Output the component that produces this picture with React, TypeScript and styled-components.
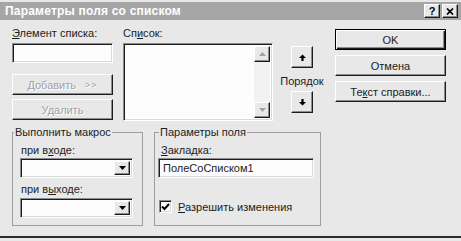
import styled, { createGlobalStyle, css } from "styled-components";

const GlobalStyle = createGlobalStyle`
  html, body {
    margin: 0;
    padding: 0;
    background: #e8e8e8;
  }
  body {
    font-family: "Liberation Sans", Arial, sans-serif;
    font-size: 11px;
    color: #1c1c1c;
  }
`;

const raised = css`
  box-sizing: border-box;
  background: #e8e8e8;
  border: 1px solid;
  border-color: #fff #1c1c1c #1c1c1c #fff;
  box-shadow: inset -1px -1px 0 #8c8c8c;
`;

const sunken = css`
  box-sizing: border-box;
  background: #fdfdfd;
  border: 1px solid;
  border-color: #8c8c8c #fff #fff #8c8c8c;
  box-shadow: inset 1px 1px 0 #1c1c1c, inset -1px -1px 0 #dadada;
`;

const Window = styled.div`
  width: 461px;
  height: 238px;
  box-sizing: border-box;
  padding-top: 2px;
  background: #e8e8e8;
  border-bottom: 2px solid #2c2c2c;
  display: flex;
  flex-direction: column;
`;

const TitleBar = styled.div`
  height: 18px;
  background: #a6a6a6;
  display: flex;
  align-items: center;
  justify-content: space-between;
  padding: 0 3px 0 5px;
`;

const Title = styled.span`
  font-weight: bold;
  font-size: 12px;
  color: #fff;
  letter-spacing: 0.2px;
`;

const CaptionButtons = styled.div`
  display: flex;
  gap: 2px;
`;

const CaptionButton = styled.div`
  ${raised};
  width: 16px;
  height: 14px;
  display: flex;
  align-items: center;
  justify-content: center;
  font-weight: bold;
  font-size: 11px;
  color: #000;
`;

const Content = styled.div`
  padding: 7px 0 0 12px;
  display: flex;
  flex-direction: column;
`;

const TopRow = styled.div`
  display: flex;
  align-items: flex-start;
  height: 94px;
`;

const Column = styled.div<{ $width: number; $gap?: number }>`
  width: ${(p) => p.$width}px;
  margin-left: ${(p) => p.$gap ?? 0}px;
  display: flex;
  flex-direction: column;
`;

const Label = styled.div<{ $indent?: number }>`
  line-height: 13px;
  height: 13px;
  padding-left: ${(p) => p.$indent ?? 0}px;
  white-space: nowrap;
`;

const Key = styled.span`
  text-decoration: underline;
  text-underline-offset: 1px;
`;

const TextField = styled.div<{ $width: number }>`
  ${sunken};
  width: ${(p) => p.$width}px;
  height: 20px;
  margin-top: 3px;
  padding: 3px 4px;
  line-height: 13px;
  white-space: nowrap;
`;

const Button = styled.button<{ $primary?: boolean }>`
  ${raised};
  font: 11px "Liberation Sans", Arial, sans-serif;
  color: #1c1c1c;
  height: 21px;
  padding: 0;
  display: flex;
  align-items: center;
  justify-content: center;
  ${(p) =>
    p.$primary &&
    css`
      border-color: #000;
      box-shadow: inset 1px 1px 0 #fff, inset -1px -1px 0 #1c1c1c,
        inset -2px -2px 0 #8c8c8c;
    `}
  &:disabled {
    color: #a2a2a2;
    text-shadow: 1px 1px 0 #fff;
  }
`;

const SideButtons = styled.div`
  margin-top: 11px;
  display: flex;
  flex-direction: column;
  gap: 4px;
`;

const Chevrons = styled.span`
  font-size: 9px;
  margin-left: 9px;
  letter-spacing: 1px;
`;

const ListBox = styled.div`
  ${sunken};
  height: 78px;
  margin-top: 3px;
  padding: 2px;
  display: flex;
  justify-content: flex-end;
`;

const ScrollBar = styled.div`
  width: 16px;
  display: flex;
  flex-direction: column;
`;

const ScrollTrack = styled.div`
  flex: 1;
  background: #f2f2f2;
`;

const ScrollArrow = styled.div`
  ${raised};
  height: 16px;
  display: flex;
  align-items: center;
  justify-content: center;
`;

const OrderColumn = styled.div`
  width: 44px;
  margin-left: 7px;
  padding-top: 19px;
  display: flex;
  flex-direction: column;
  align-items: center;
`;

const OrderButton = styled.div`
  ${raised};
  width: 22px;
  height: 22px;
  display: flex;
  align-items: center;
  justify-content: center;
`;

const OrderLabel = styled.div`
  line-height: 13px;
  margin: 7px 0 3px;
`;

const DialogButtons = styled.div`
  width: 111px;
  margin-left: 11px;
  padding-top: 2px;
  display: flex;
  flex-direction: column;
  gap: 5px;
`;

const BottomRow = styled.div`
  display: flex;
  gap: 11px;
  margin-top: 5px;
`;

const Group = styled.fieldset<{ $width: number; $pad: number }>`
  box-sizing: border-box;
  width: ${(p) => p.$width}px;
  height: 100px;
  margin: 0;
  padding: 5px 0 0 ${(p) => p.$pad}px;
  border: 1px solid #9e9e9e;
  display: flex;
  flex-direction: column;
`;

const Legend = styled.legend<{ $shift: number }>`
  padding: 0 1px;
  margin-left: ${(p) => p.$shift}px;
  line-height: 13px;
`;

const Combo = styled.div<{ $top: number }>`
  ${sunken};
  width: 113px;
  height: 20px;
  margin-top: ${(p) => p.$top}px;
  padding: 2px;
  display: flex;
  justify-content: flex-end;
`;

const DropButton = styled.div`
  ${raised};
  width: 16px;
  display: flex;
  align-items: center;
  justify-content: center;
`;

const CheckRow = styled.div`
  display: flex;
  align-items: center;
  margin-top: 22px;
  padding-left: 1px;
  gap: 6px;
`;

const CheckBox = styled.div`
  ${sunken};
  width: 13px;
  height: 13px;
  display: flex;
  align-items: center;
  justify-content: center;
`;

const Triangle = ({ up, color = "#000" }: { up?: boolean; color?: string }) => (
  <svg width="7" height="4" viewBox="0 0 7 4">
    <path d={up ? "M0 4 L3.5 0 L7 4 Z" : "M0 0 L7 0 L3.5 4 Z"} fill={color} />
  </svg>
);

const Arrow = ({ up }: { up?: boolean }) => (
  <svg width="7" height="7" viewBox="0 0 7 7">
    <path
      d={
        up
          ? "M3.5 0.5 L7 4 H4.6 V7 H2.4 V4 H0 Z"
          : "M3.5 6.5 L7 3 H4.6 V0 H2.4 V3 H0 Z"
      }
      fill="#000"
    />
  </svg>
);

export default function App() {
  return (
    <>
      <GlobalStyle />
      <Window>
        <TitleBar>
          <Title>Параметры поля со списком</Title>
          <CaptionButtons>
            <CaptionButton>?</CaptionButton>
            <CaptionButton>
              <svg width="8" height="7" viewBox="0 0 8 7">
                <path d="M1 0.5 L7 6.5 M7 0.5 L1 6.5" stroke="#000" strokeWidth="1.7" />
              </svg>
            </CaptionButton>
          </CaptionButtons>
        </TitleBar>

        <Content>
          <TopRow>
            <Column $width={101}>
              <Label>
                <Key>Э</Key>лемент списка:
              </Label>
              <TextField $width={101} />
              <SideButtons>
                <Button disabled>
                  Добавить<Chevrons>&gt;&gt;</Chevrons>
                </Button>
                <Button disabled>Удалить</Button>
              </SideButtons>
            </Column>

            <Column $width={150} $gap={10}>
              <Label>
                Сп<Key>и</Key>сок:
              </Label>
              <ListBox>
                <ScrollBar>
                  <ScrollArrow>
                    <Triangle up color="#a2a2a2" />
                  </ScrollArrow>
                  <ScrollTrack />
                  <ScrollArrow>
                    <Triangle color="#a2a2a2" />
                  </ScrollArrow>
                </ScrollBar>
              </ListBox>
            </Column>

            <OrderColumn>
              <OrderButton>
                <Arrow up />
              </OrderButton>
              <OrderLabel>Порядок</OrderLabel>
              <OrderButton>
                <Arrow />
              </OrderButton>
            </OrderColumn>

            <DialogButtons>
              <Button $primary>OK</Button>
              <Button>Отмена</Button>
              <Button>
                Те<Key>к</Key>ст справки...
              </Button>
            </DialogButtons>
          </TopRow>

          <BottomRow>
            <Group $width={131} $pad={7}>
              <Legend $shift={-6}>Выполнить макрос</Legend>
              <Label $indent={1}>
                при в<Key>х</Key>оде:
              </Label>
              <Combo $top={1}>
                <DropButton>
                  <Triangle />
                </DropButton>
              </Combo>
              <Label $indent={1} style={{ marginTop: 5 }}>
                при в<Key>ы</Key>ходе:
              </Label>
              <Combo $top={2}>
                <DropButton>
                  <Triangle />
                </DropButton>
              </Combo>
            </Group>

            <Group $width={167} $pad={3}>
              <Legend $shift={1}>Параметры поля</Legend>
              <Label $indent={3}>
                <Key>З</Key>акладка:
              </Label>
              <TextField $width={156} style={{ marginTop: 1 }}>
                ПолеСоСписком1
              </TextField>
              <CheckRow>
                <CheckBox>
                  <svg width="9" height="8" viewBox="0 0 9 8">
                    <path d="M1 3.5 L3.5 6 L8 1" stroke="#000" strokeWidth="2" fill="none" />
                  </svg>
                </CheckBox>
                <span>
                  <Key>Р</Key>азрешить изменения
                </span>
              </CheckRow>
            </Group>
          </BottomRow>
        </Content>
      </Window>
    </>
  );
}
